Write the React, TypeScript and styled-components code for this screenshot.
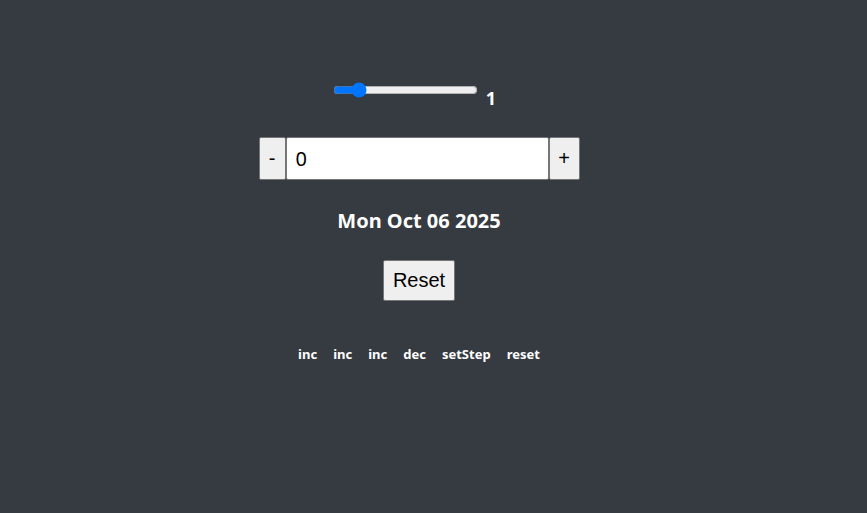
import React, { useState } from "react";
import styled, { createGlobalStyle } from "styled-components";

const Global = createGlobalStyle`
  html, body { margin: 0; padding: 0; background: #363a41; }
  body { font-family: "Noto Sans", "Open Sans", sans-serif; color: #fff; }
`;

const Page = styled.div`
  width: 867px;
  height: 513px;
  box-sizing: border-box;
  padding: 74px 29px 0 0;
  display: flex;
  flex-direction: column;
  align-items: center;
`;

const SliderRow = styled.div`
  display: flex;
  align-items: flex-start;
  gap: 8px;
  margin-right: 9px;
`;

const Range = styled.input`
  width: 145px;
  height: 16px;
  margin: 8px 0 0 0;
`;

const StepLabel = styled.span`
  font-size: 18px;
  font-weight: 700;
  line-height: 24px;
  padding-top: 12px;
`;

const CounterRow = styled.div`
  display: flex;
  margin-top: 27px;
  height: 43px;
`;

const SideButton = styled.button<{ $w: number }>`
  width: ${(p) => p.$w}px;
  height: 43px;
  box-sizing: border-box;
  background: #efefef;
  border: 1px solid #767676;
  border-radius: 2px;
  font-family: "Liberation Sans", Arial, sans-serif;
  font-size: 20px;
  color: #000;
  padding: 0;
`;

const NumberInput = styled.input`
  width: 263px;
  height: 43px;
  box-sizing: border-box;
  border: 1px solid #767676;
  border-radius: 2px;
  background: #fff;
  font-family: "Noto Sans", "Open Sans", sans-serif;
  font-size: 20px;
  color: #000;
  padding: 0 0 0 9px;
  outline: none;
`;

const DateText = styled.div`
  margin-top: 28px;
  font-size: 20px;
  font-weight: 700;
  line-height: 26px;
`;

const ResetButton = styled.button`
  margin-top: 26px;
  width: 72px;
  height: 41px;
  box-sizing: border-box;
  background: #efefef;
  border: 1px solid #767676;
  border-radius: 2px;
  font-family: "Liberation Sans", Arial, sans-serif;
  font-size: 20px;
  color: #000;
  padding: 0;
`;

const ActionList = styled.div`
  margin-top: 44px;
  display: flex;
  gap: 16px;
  font-size: 13px;
  font-weight: 700;
  line-height: 18px;
`;

const Action = styled.span``;

export default function App() {
  const [step, setStep] = useState(1);
  const [count, setCount] = useState(0);
  const actions = ["inc", "inc", "inc", "dec", "setStep", "reset"];
  return (
    <>
      <Global />
      <Page>
        <SliderRow>
          <Range
            type="range"
            min={0}
            max={7}
            value={step}
            onChange={(e) => setStep(Number(e.target.value))}
          />
          <StepLabel>{step}</StepLabel>
        </SliderRow>
        <CounterRow>
          <SideButton $w={27} onClick={() => setCount(count - step)}>-</SideButton>
          <NumberInput
            value={count}
            onChange={(e) => setCount(Number(e.target.value) || 0)}
          />
          <SideButton $w={31} onClick={() => setCount(count + step)}>+</SideButton>
        </CounterRow>
        <DateText>Mon Oct 06 2025</DateText>
        <ResetButton onClick={() => setCount(0)}>Reset</ResetButton>
        <ActionList>
          {actions.map((a, i) => (
            <Action key={i}>{a}</Action>
          ))}
        </ActionList>
      </Page>
    </>
  );
}
